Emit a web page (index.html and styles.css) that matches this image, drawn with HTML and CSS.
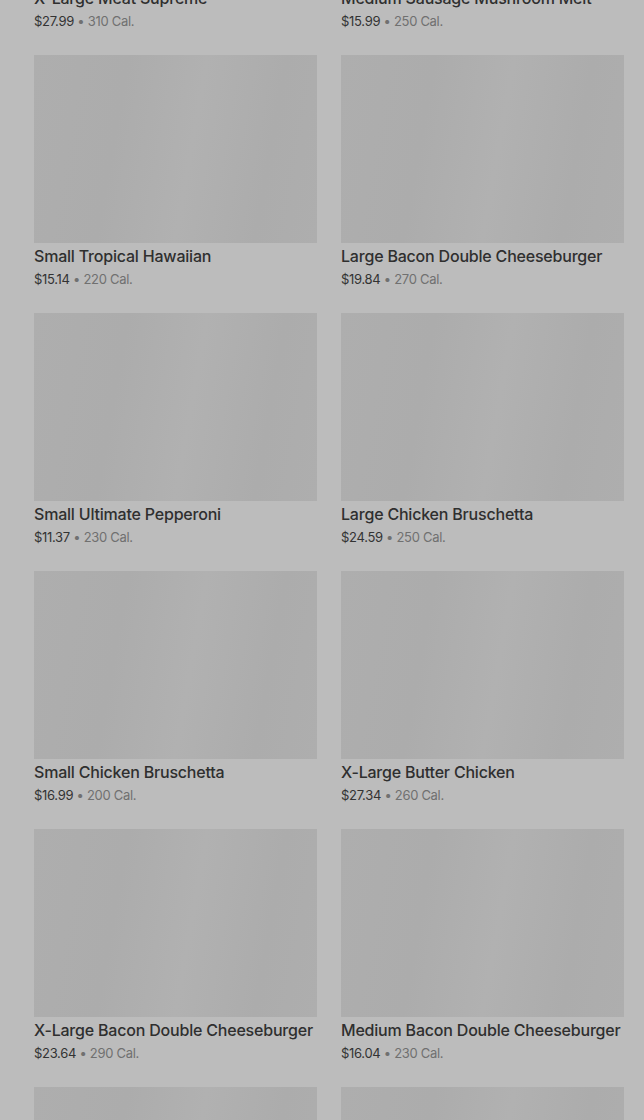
FILE: index.html
```html
<!DOCTYPE html>
<html>
<head>
<meta charset="utf-8">
<link rel="stylesheet" href="styles.css">
</head>
<body>
<main class="menu">
  <div class="card"><div class="thumb"></div><div class="title">X-Large Meat Supreme</div><div class="meta"><span class="price">$27.99</span> • 310 Cal.</div></div>
  <div class="card"><div class="thumb"></div><div class="title">Medium Sausage Mushroom Melt</div><div class="meta"><span class="price">$15.99</span> • 250 Cal.</div></div>
  <div class="card"><div class="thumb"></div><div class="title">Small Tropical Hawaiian</div><div class="meta"><span class="price">$15.14</span> • 220 Cal.</div></div>
  <div class="card"><div class="thumb"></div><div class="title">Large Bacon Double Cheeseburger</div><div class="meta"><span class="price">$19.84</span> • 270 Cal.</div></div>
  <div class="card"><div class="thumb"></div><div class="title">Small Ultimate Pepperoni</div><div class="meta"><span class="price">$11.37</span> • 230 Cal.</div></div>
  <div class="card"><div class="thumb"></div><div class="title">Large Chicken Bruschetta</div><div class="meta"><span class="price">$24.59</span> • 250 Cal.</div></div>
  <div class="card"><div class="thumb"></div><div class="title">Small Chicken Bruschetta</div><div class="meta"><span class="price">$16.99</span> • 200 Cal.</div></div>
  <div class="card"><div class="thumb"></div><div class="title">X-Large Butter Chicken</div><div class="meta"><span class="price">$27.34</span> • 260 Cal.</div></div>
  <div class="card"><div class="thumb"></div><div class="title">X-Large Bacon Double Cheeseburger</div><div class="meta"><span class="price">$23.64</span> • 290 Cal.</div></div>
  <div class="card"><div class="thumb"></div><div class="title">Medium Bacon Double Cheeseburger</div><div class="meta"><span class="price">$16.04</span> • 230 Cal.</div></div>
  <div class="card"><div class="thumb"></div></div>
  <div class="card"><div class="thumb"></div></div>
</main>
</body>
</html>
```
FILE: styles.css
```css
html, body {
  margin: 0;
  padding: 0;
  background: #bcbcbc;
  overflow: hidden;
  height: 1120px;
}
.menu {
  display: grid;
  grid-template-columns: 283px 283px;
  column-gap: 24px;
  row-gap: 24px;
  padding: 0 20px 0 34px;
  margin-top: -203px;
  font-family: Inter, "Liberation Sans", sans-serif;
}
.card {
  display: flex;
  flex-direction: column;
  min-width: 0;
}
.thumb {
  height: 188px;
  background: linear-gradient(100deg, #aeaeae 0%, #acacac 30%, #b1b1b1 55%, #acacac 80%, #aeaeae 100%);
}
.title {
  margin-top: 1px;
  font-size: 16px;
  line-height: 24px;
  font-weight: 500;
  color: #2f2f2f;
  letter-spacing: -0.2px;
  white-space: nowrap;
}
.meta {
  margin-top: 1px;
  font-size: 13px;
  line-height: 20px;
  color: #707070;
  letter-spacing: -0.3px;
}
.price {
  color: #333333;
}
```
